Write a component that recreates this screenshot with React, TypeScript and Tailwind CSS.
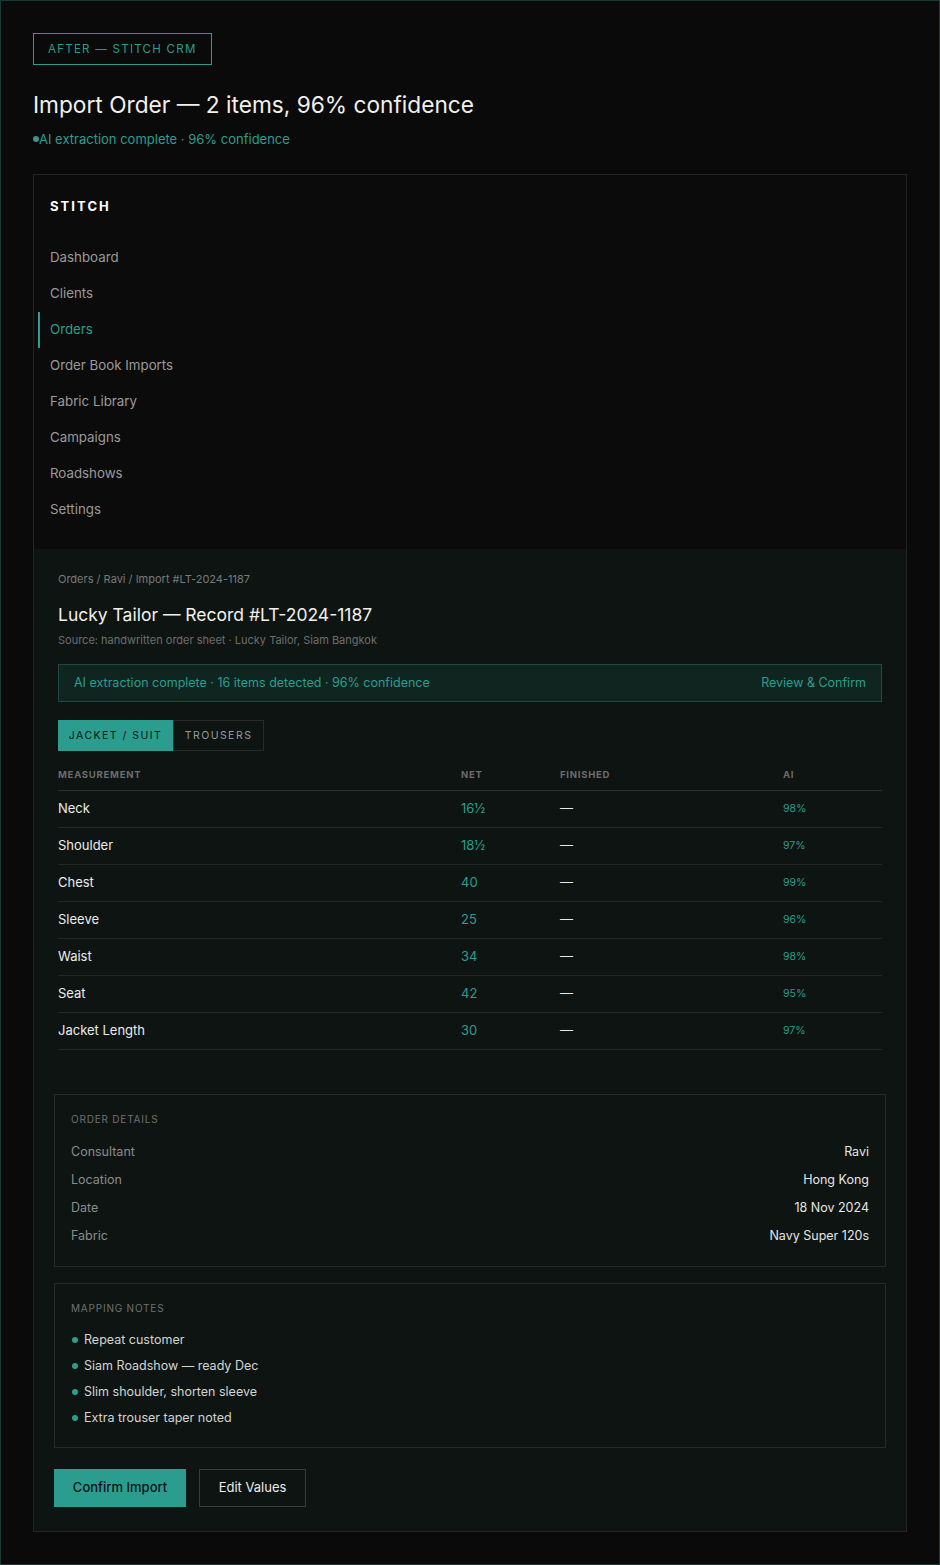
import React from "react";

type Row = {
  name: string;
  net: string;
  ai: string;
};

const rows: Row[] = [
  { name: "Neck", net: "16½", ai: "98%" },
  { name: "Shoulder", net: "18½", ai: "97%" },
  { name: "Chest", net: "40", ai: "99%" },
  { name: "Sleeve", net: "25", ai: "96%" },
  { name: "Waist", net: "34", ai: "98%" },
  { name: "Seat", net: "42", ai: "95%" },
  { name: "Jacket Length", net: "30", ai: "97%" },
];

const navItems = [
  "Dashboard",
  "Clients",
  "Orders",
  "Order Book Imports",
  "Fabric Library",
  "Campaigns",
  "Roadshows",
  "Settings",
];

const details = [
  ["Consultant", "Ravi"],
  ["Location", "Hong Kong"],
  ["Date", "18 Nov 2024"],
  ["Fabric", "Navy Super 120s"],
];

const notes = [
  "Repeat customer",
  "Siam Roadshow — ready Dec",
  "Slim shoulder, shorten sleeve",
  "Extra trouser taper noted",
];

function Sidebar() {
  return (
    <aside className="bg-[#0b0b0b] pt-[21px] pb-[21px]">
      <div className="px-4 text-[13px] font-bold tracking-[0.16em] text-white leading-5">
        STITCH
      </div>
      <nav className="mt-6 px-1 flex flex-col">
        {navItems.map((item) => {
          const active = item === "Orders";
          return (
            <div
              key={item}
              className={
                active
                  ? "h-9 flex items-center pl-[10px] border-l-2 border-[#2a9d8f] text-[#2a9d8f] text-[13.3px]"
                  : "h-9 flex items-center pl-[10px] border-l-2 border-transparent text-[#9a9a9a] text-[13.3px]"
              }
            >
              {item}
            </div>
          );
        })}
      </nav>
    </aside>
  );
}

function MeasurementTable() {
  return (
    <div className="mt-[13px]">
      <div className="grid grid-cols-[403px_99px_223px_1fr] h-[27px] items-start border-b border-[#2e2e2e] text-[9.5px] font-bold tracking-[0.08em] text-[#6c6c6c] pt-[4px]">
        <div>MEASUREMENT</div>
        <div>NET</div>
        <div>FINISHED</div>
        <div>AI</div>
      </div>
      {rows.map((r) => (
        <div
          key={r.name}
          className="grid grid-cols-[403px_99px_223px_1fr] h-[37px] items-center border-b border-[#232826]"
        >
          <div className="text-[13px] text-[#ececec]">{r.name}</div>
          <div className="text-[13px] text-[#2a9d8f]">{r.net}</div>
          <div className="text-[13px] text-[#e8e8e8]">—</div>
          <div className="text-[10.5px] text-[#2a9d8f]">{r.ai}</div>
        </div>
      ))}
    </div>
  );
}

function MainPanel() {
  return (
    <section className="bg-[#0d1412]">
      <div className="px-6 pt-[22px]">
        <div className="text-[11px] text-[#7a7a7a] leading-4">
          Orders / Ravi / Import #LT-2024-1187
        </div>
        <h2 className="mt-[16px] text-[17.5px] text-[#f2f0ea] leading-6">
          Lucky Tailor — Record #LT-2024-1187
        </h2>
        <div className="mt-[5px] text-[11px] text-[#6e6e6e] leading-4">
          Source: handwritten order sheet · Lucky Tailor, Siam Bangkok
        </div>

        <div className="mt-[16px] h-[38px] flex items-center justify-between px-[15px] bg-[#112520] border border-[#1f4a42] text-[12.5px] text-[#2a9d8f]">
          <span>AI extraction complete · 16 items detected · 96% confidence</span>
          <span>Review &amp; Confirm</span>
        </div>

        <div className="mt-[18px] flex">
          <button className="h-[31px] w-[115px] bg-[#2a9d8f] text-[#0d1412] text-[10.5px] tracking-[0.14em]">
            JACKET / SUIT
          </button>
          <button className="h-[31px] w-[91px] border border-[#2a2a2a] text-[#9a9a9a] text-[10.5px] tracking-[0.14em]">
            TROUSERS
          </button>
        </div>

        <MeasurementTable />
      </div>

      <div className="px-5 pt-11 pb-6 flex flex-col">
        <div className="border border-[#262a29] px-4 pt-[16px] pb-[16px]">
          <div className="text-[10px] tracking-[0.08em] text-[#707070] leading-4">
            ORDER DETAILS
          </div>
          <div className="mt-[11px] flex flex-col">
            {details.map(([k, v]) => (
              <div key={k} className="h-7 flex items-center justify-between text-[12.5px]">
                <span className="text-[#8c8c8c]">{k}</span>
                <span className="text-[#e6e6e6]">{v}</span>
              </div>
            ))}
          </div>
        </div>

        <div className="mt-4 border border-[#262a29] px-4 pt-[16px] pb-[16px]">
          <div className="text-[10px] tracking-[0.08em] text-[#707070] leading-4">
            MAPPING NOTES
          </div>
          <ul className="mt-[11px] flex flex-col">
            {notes.map((n) => (
              <li key={n} className="h-[26px] flex items-center gap-[6px] text-[12.5px] text-[#d4d4d4]">
                <span className="ml-[1px] w-[6px] h-[6px] rounded-full bg-[#2a9d8f]" />
                {n}
              </li>
            ))}
          </ul>
        </div>

        <div className="mt-[21px] flex gap-[13px]">
          <button className="h-[38px] w-[132px] bg-[#2a9d8f] text-[#0d1412] text-[13px] font-medium">
            Confirm Import
          </button>
          <button className="h-[38px] w-[107px] border border-[#3a3a3a] text-[#ececec] text-[13px]">
            Edit Values
          </button>
        </div>
      </div>
    </section>
  );
}

export default function App() {
  return (
    <div
      className="min-h-[1565px] bg-[#0a0a0a] border border-[#173a34] p-8"
      style={{ fontFamily: "Inter, 'Noto Sans', sans-serif" }}
    >
      <div className="inline-block border border-[#2a9d8f] px-[14px] py-[7px] text-[11.5px] leading-4 tracking-[0.11em] text-[#2a9d8f]">
        AFTER — STITCH CRM
      </div>
      <h1 className="mt-[26px] text-[22.7px] leading-7 text-[#f2f0ea]">
        Import Order — 2 items, 96% confidence
      </h1>
      <div className="mt-[10px] flex items-center text-[13px] leading-5 text-[#2a9d8f]">
        <span className="w-[6px] h-[6px] rounded-full bg-[#2a9d8f]" />
        AI extraction complete · 96% confidence
      </div>

      <div className="mt-[25px] border border-[#222524] flex flex-col">
        <Sidebar />
        <MainPanel />
      </div>
    </div>
  );
}
